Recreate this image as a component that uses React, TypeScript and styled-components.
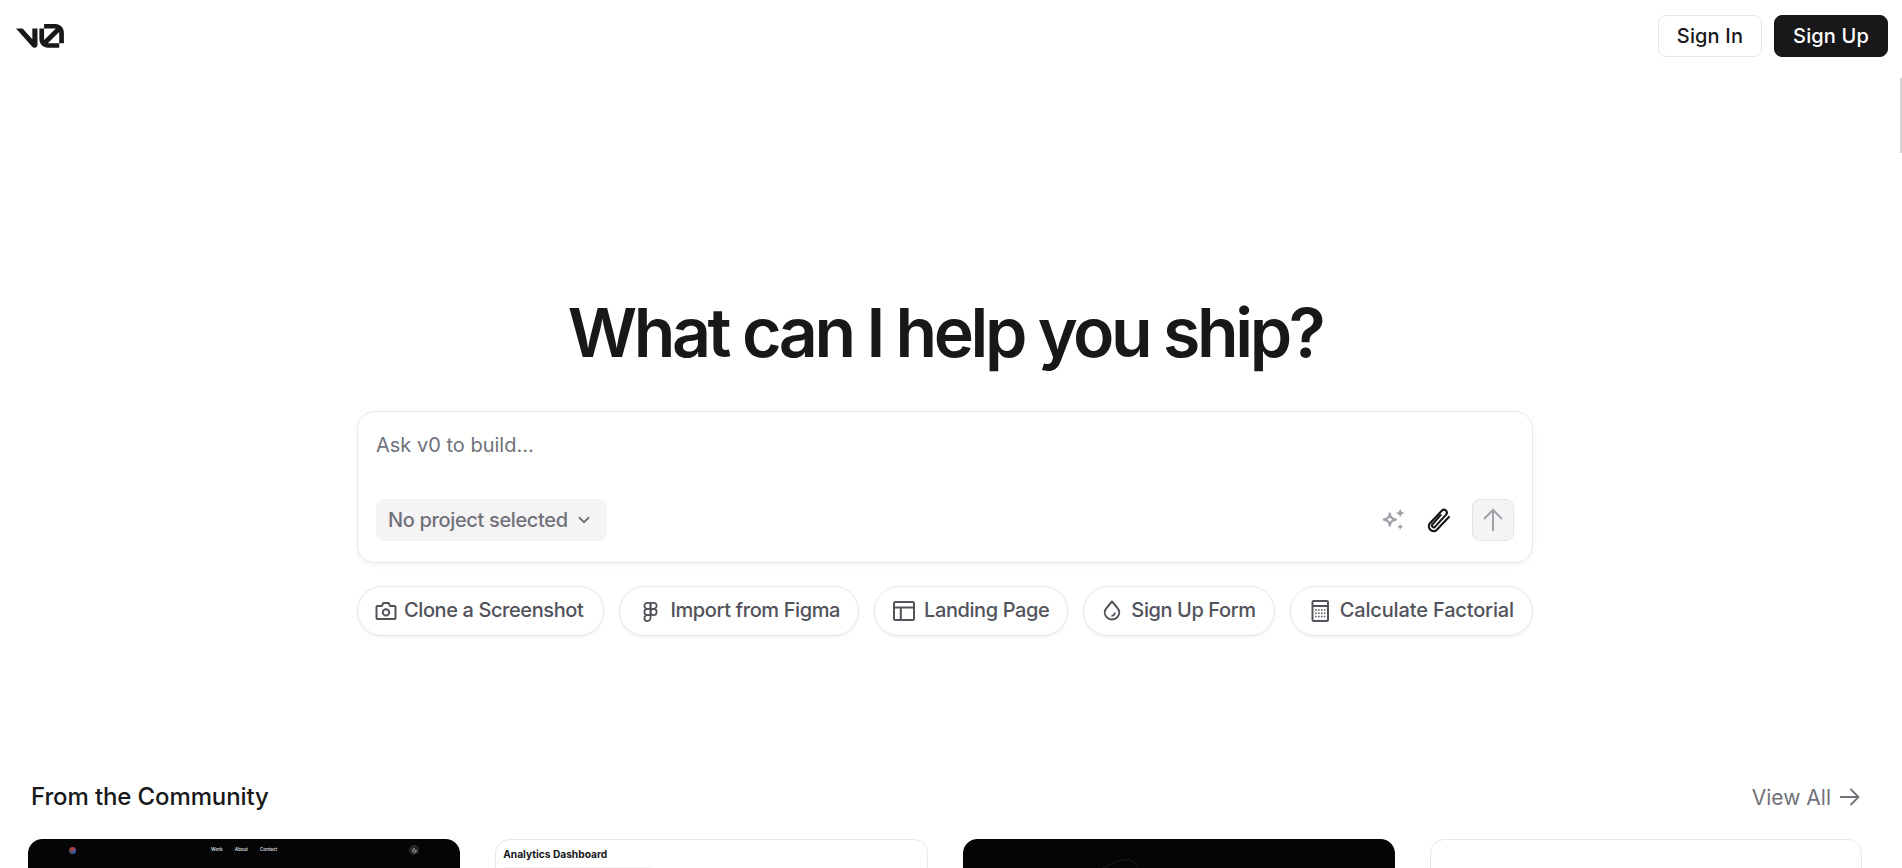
import React from "react";
import styled, { createGlobalStyle } from "styled-components";
import { Figma, ChevronDown, Moon } from "lucide-react";

const Global = createGlobalStyle`
  html, body { margin: 0; padding: 0; height: 100%; overflow: hidden; background: #fff; }
  body { font-family: Inter, "Liberation Sans", sans-serif; color: #18181b; }
  * { box-sizing: border-box; }
`;

const Page = styled.div`
  height: 868px;
  overflow: hidden;
  display: flex;
  flex-direction: column;
`;

const Header = styled.header`
  display: flex;
  align-items: center;
  justify-content: space-between;
  padding: 15px 14px 0 16px;
`;

const Actions = styled.div`
  display: flex;
  gap: 12px;
`;

const HeaderButton = styled.button<{ $dark?: boolean }>`
  height: 42px;
  padding: 0 18px;
  border-radius: 8px;
  font: 500 20px/1 Inter, sans-serif;
  letter-spacing: 0.15px;
  border: 1px solid ${(p) => (p.$dark ? "#18181b" : "#e8e8ea")};
  background: ${(p) => (p.$dark ? "#18181b" : "#fff")};
  color: ${(p) => (p.$dark ? "#fff" : "#18181b")};
`;

const ScrollThumb = styled.div`
  position: fixed;
  top: 78px;
  right: 0;
  width: 2px;
  height: 75px;
  background: #d4d4d4;
`;

const Hero = styled.main`
  display: flex;
  flex-direction: column;
  align-items: center;
  padding: 235px 12px 0 0;
`;

const Title = styled.h1`
  margin: 0;
  font: 600 68px/80px Inter, sans-serif;
  letter-spacing: -3.4px;
  color: #18181b;
`;

const Prompt = styled.div`
  width: 1176px;
  height: 152px;
  margin-top: 39px;
  padding: 18px 18px 21px 18px;
  border: 1px solid #e8e8ea;
  border-radius: 18px;
  background: #fff;
  box-shadow: 0 2px 6px rgba(0, 0, 0, 0.05);
  display: flex;
  flex-direction: column;
  justify-content: space-between;
`;

const Placeholder = styled.div`
  font: 400 20px/30px Inter, sans-serif;
  color: #71717a;
`;

const PromptFooter = styled.div`
  display: flex;
  align-items: center;
  justify-content: space-between;
`;

const ProjectPill = styled.button`
  display: flex;
  align-items: center;
  gap: 7px;
  height: 42px;
  padding: 0 14px 0 12px;
  border: 0;
  border-radius: 8px;
  background: #f4f4f5;
  color: #71717a;
  font: 500 20px/1 Inter, sans-serif;
  letter-spacing: -0.35px;
`;

const Tools = styled.div`
  display: flex;
  align-items: center;
`;

const SparkSlot = styled.span`
  display: flex;
  margin-right: 19px;
`;

const ClipSlot = styled.span`
  display: flex;
  margin-right: 20px;
`;

const SendButton = styled.button`
  width: 42px;
  height: 42px;
  display: flex;
  align-items: center;
  justify-content: center;
  padding: 0;
  border: 1px solid #e4e4e7;
  border-radius: 8px;
  background: #f4f4f5;
  color: #a1a1aa;
`;

const ChipRow = styled.div`
  width: 1176px;
  margin-top: 23px;
  display: flex;
  justify-content: space-between;
`;

const Chip = styled.button<{ $left?: number; $right?: number; $gap?: number }>`
  display: flex;
  align-items: center;
  gap: ${(p) => p.$gap ?? 9}px;
  height: 50px;
  padding: 0 ${(p) => p.$right ?? 18}px 0 ${(p) => p.$left ?? 18}px;
  border: 1px solid #e8e8ea;
  border-radius: 25px;
  background: #fff;
  box-shadow: 0 1px 3px rgba(0, 0, 0, 0.07);
  color: #52525b;
  font: 500 20px/1 Inter, sans-serif;
  white-space: nowrap;
`;

const ChipLabel = styled.span<{ $tracking?: number }>`
  padding-bottom: 2px;
  letter-spacing: ${(p) => p.$tracking ?? -0.4}px;
`;

const Community = styled.section`
  margin-top: 145px;
  padding: 0 40px 0 28px;
`;

const CommunityHead = styled.div`
  display: flex;
  align-items: center;
  justify-content: space-between;
  padding: 0 2px 0 3px;
  height: 32px;
`;

const CommunityTitle = styled.h2`
  margin: 0;
  font: 500 24px/32px Inter, sans-serif;
  letter-spacing: -0.12px;
  color: #18181b;
`;

const ViewAll = styled.a`
  display: flex;
  align-items: center;
  gap: 9px;
  font: 400 21px/1 Inter, sans-serif;
  color: #71717a;
`;

const Cards = styled.div`
  margin-top: 26px;
  display: grid;
  grid-template-columns: repeat(4, 1fr);
  gap: 35px;
`;

const Card = styled.article<{ $dark?: boolean }>`
  height: 260px;
  border-radius: 14px;
  overflow: hidden;
  border: 1px solid ${(p) => (p.$dark ? "#050507" : "#e8e8ea")};
  background: ${(p) => (p.$dark ? "#050507" : "#fff")};
`;

const MiniNav = styled.div`
  display: grid;
  grid-template-columns: 1fr auto 1fr;
  align-items: center;
  padding: 4px 40px 3px;
  height: 19px;
`;

const MiniLogo = styled.span`
  width: 7px;
  height: 7px;
  border-radius: 50%;
  background: conic-gradient(#c0392b, #2d5fb8, #555, #c0392b);
`;

const MiniLinks = styled.div`
  display: flex;
  gap: 12px;
  font: 500 4.6px/1 Inter, sans-serif;
  color: #e4e4e7;
`;

const MiniAvatar = styled.span`
  justify-self: end;
  display: flex;
  align-items: center;
  justify-content: center;
  width: 10px;
  height: 10px;
  border-radius: 50%;
  background: #27272a;
  color: #e4e4e7;
`;

const DashTitle = styled.div`
  padding: 7px 7px 0;
  font: 700 10.2px/14px Inter, sans-serif;
  color: #18181b;
`;

const DashTabs = styled.div`
  margin: 6px 7px 0;
  width: 150px;
  height: 20px;
  padding: 1px;
  border-radius: 3px;
  background: #f4f4f5;
`;

const DashTab = styled.div`
  width: 34px;
  height: 18px;
  border-radius: 2px;
  background: #fff;
`;

const FaintShape = styled.svg`
  display: block;
`;

const Spark = () => (
  <svg width="25" height="24" viewBox="0 0 25 24" fill="none">
    <path d="M7.8 5.6 C8.4 9.4 9.6 10.6 13.8 11.6 C9.6 12.6 8.4 13.8 7.8 17.6 C7.2 13.8 6 12.6 1.8 11.6 C6 10.6 7.2 9.4 7.8 5.6 Z" stroke="#a1a1aa" strokeWidth="2.2" strokeLinejoin="round" />
    <path d="M18.2 0.4 C18.9 3.3 19.8 4.2 23 5 C19.8 5.8 18.9 6.7 18.2 9.6 C17.5 6.7 16.6 5.8 13.4 5 C16.6 4.2 17.5 3.3 18.2 0.4 Z" fill="#a1a1aa" />
    <path d="M18.2 15.4 C18.7 17.4 19.2 18 21.4 18.7 C19.2 19.4 18.7 20 18.2 22 C17.7 20 17.2 19.4 15 18.7 C17.2 18 17.7 17.4 18.2 15.4 Z" fill="#a1a1aa" />
  </svg>
);

const Clip = () => (
  <svg width="26" height="28" viewBox="0 0 24 26" fill="none" stroke="#18181b" strokeWidth="2" strokeLinecap="round" strokeLinejoin="round">
    <path d="M13.5 8.5 L5.8 17.2 C4.6 18.6 6.8 20.8 8.2 19.4 L18.6 8 C20.8 5.4 17.2 1.8 14.8 4.2 L3.8 15.8 C0 20 6 26.2 10 22 L21.2 10.2" />
  </svg>
);

const UpArrow = () => (
  <svg width="22" height="24" viewBox="0 0 22 24" fill="none" stroke="#a1a1aa" strokeWidth="2">
    <path d="M11 2 V23 M2 11 L11 2 L20 11" />
  </svg>
);

const CameraIcon = () => (
  <svg width="22" height="22" viewBox="0 0 22 22" fill="none" stroke="#52525b" strokeWidth="2" strokeLinejoin="round">
    <path d="M2.5 6 H6.8 L8.4 3 H13.6 L15.2 6 H19.5 C20.2 6 20.5 6.4 20.5 7 V18 C20.5 18.7 20.2 19 19.5 19 H2.5 C1.8 19 1.5 18.7 1.5 18 V7 C1.5 6.4 1.8 6 2.5 6 Z" />
    <circle cx="11" cy="12.4" r="3.2" />
  </svg>
);

const LayoutIcon = () => (
  <svg width="22" height="22" viewBox="0 0 22 22" fill="none" stroke="#52525b" strokeWidth="2">
    <rect x="1" y="2" width="20" height="18" rx="1.5" />
    <path d="M1 7.5 H21 M7.8 7.5 V20" />
  </svg>
);

const Drop = () => (
  <svg width="20" height="22" viewBox="1 0 20 22" fill="none" stroke="#52525b" strokeWidth="2" strokeLinecap="round" strokeLinejoin="round">
    <path d="M11 1.5 L16.2 7.6 C18.9 10.8 18.8 14.6 16.4 17.1 C13.4 20.2 8.6 20.2 5.6 17.1 C3.2 14.6 3.1 10.8 5.8 7.6 Z" />
    <path d="M13.8 13.2 C13.6 14.8 12.6 15.7 11 16" strokeWidth="1.7" />
  </svg>
);

const Calc = () => (
  <svg width="22" height="22" viewBox="0 0 22 22" fill="none" stroke="#52525b" strokeWidth="2">
    <rect x="3.5" y="1" width="15.5" height="20" rx="1.2" />
    <path d="M3.5 6 H19" />
    <path d="M6.2 10 H16.4 M6.2 13.2 H16.4 M6.2 16.4 H16.4" strokeWidth="1.5" strokeDasharray="1.5 1.4" />
  </svg>
);

const ViewArrow = () => (
  <svg width="20" height="18" viewBox="0 0 20 18" fill="none" stroke="#71717a" strokeWidth="1.8">
    <path d="M0 9 H18.5 M10.5 1 L18.5 9 L10.5 17" />
  </svg>
);

const Logo = () => (
  <svg width="48" height="24" viewBox="0 0 40 20" fill="#18181b">
    <path d="M23.3919 0H32.9188C36.7819 0 39.9136 3.13165 39.9136 6.99475V16.0805H36.0006V6.99475C36.0006 6.90167 35.9969 6.80925 35.9898 6.71766L26.4628 16.079C26.4949 16.08 26.5272 16.0805 26.5595 16.0805H36.0006V19.7762H26.5595C22.6964 19.7762 19.4788 16.6139 19.4788 12.7508V3.68923H23.3919V12.7508C23.3919 12.9253 23.4054 13.0977 23.4316 13.2668L33.1682 3.6995C33.0861 3.6927 33.003 3.68923 32.9188 3.68923H23.3919V0Z" />
    <path d="M13.7688 19.0956L0 3.68759H5.53933L13.6231 12.7337V3.68759H17.9V17.5746C17.9 19.6705 15.1654 20.6584 13.7688 19.0956Z" />
  </svg>
);

export default function App() {
  return (
    <Page>
      <Global />
      <Header>
        <Logo />
        <Actions>
          <HeaderButton>Sign In</HeaderButton>
          <HeaderButton $dark>Sign Up</HeaderButton>
        </Actions>
      </Header>
      <ScrollThumb />
      <Hero>
        <Title>What can I help you ship?</Title>
        <Prompt>
          <Placeholder>Ask v0 to build...</Placeholder>
          <PromptFooter>
            <ProjectPill>
              No project selected
              <ChevronDown size={18} strokeWidth={2.4} />
            </ProjectPill>
            <Tools>
              <SparkSlot><Spark /></SparkSlot>
              <ClipSlot><Clip /></ClipSlot>
              <SendButton><UpArrow /></SendButton>
            </Tools>
          </PromptFooter>
        </Prompt>
        <ChipRow>
          <Chip $left={17} $right={20} $gap={7}><CameraIcon /><ChipLabel>Clone a Screenshot</ChipLabel></Chip>
          <Chip $left={20}><Figma size={21} strokeWidth={2} /><ChipLabel>Import from Figma</ChipLabel></Chip>
          <Chip><LayoutIcon /><ChipLabel>Landing Page</ChipLabel></Chip>
          <Chip><Drop /><ChipLabel>Sign Up Form</ChipLabel></Chip>
          <Chip><Calc /><ChipLabel $tracking={-0.15}>Calculate Factorial</ChipLabel></Chip>
        </ChipRow>
      </Hero>
      <Community>
        <CommunityHead>
          <CommunityTitle>From the Community</CommunityTitle>
          <ViewAll>View All <ViewArrow /></ViewAll>
        </CommunityHead>
        <Cards>
          <Card $dark>
            <MiniNav>
              <MiniLogo />
              <MiniLinks><span>Work</span><span>About</span><span>Contact</span></MiniLinks>
              <MiniAvatar><Moon size={5} strokeWidth={3} /></MiniAvatar>
            </MiniNav>
          </Card>
          <Card>
            <DashTitle>Analytics Dashboard</DashTitle>
            <DashTabs><DashTab /></DashTabs>
          </Card>
          <Card $dark>
            <FaintShape width="432" height="40" viewBox="0 0 432 40" fill="none">
              <path d="M135 30 C 150 22 160 18 165 20 C 170 21 173 24 175 30" stroke="#1c1c20" strokeWidth="1" />
            </FaintShape>
          </Card>
          <Card />
        </Cards>
      </Community>
    </Page>
  );
}
